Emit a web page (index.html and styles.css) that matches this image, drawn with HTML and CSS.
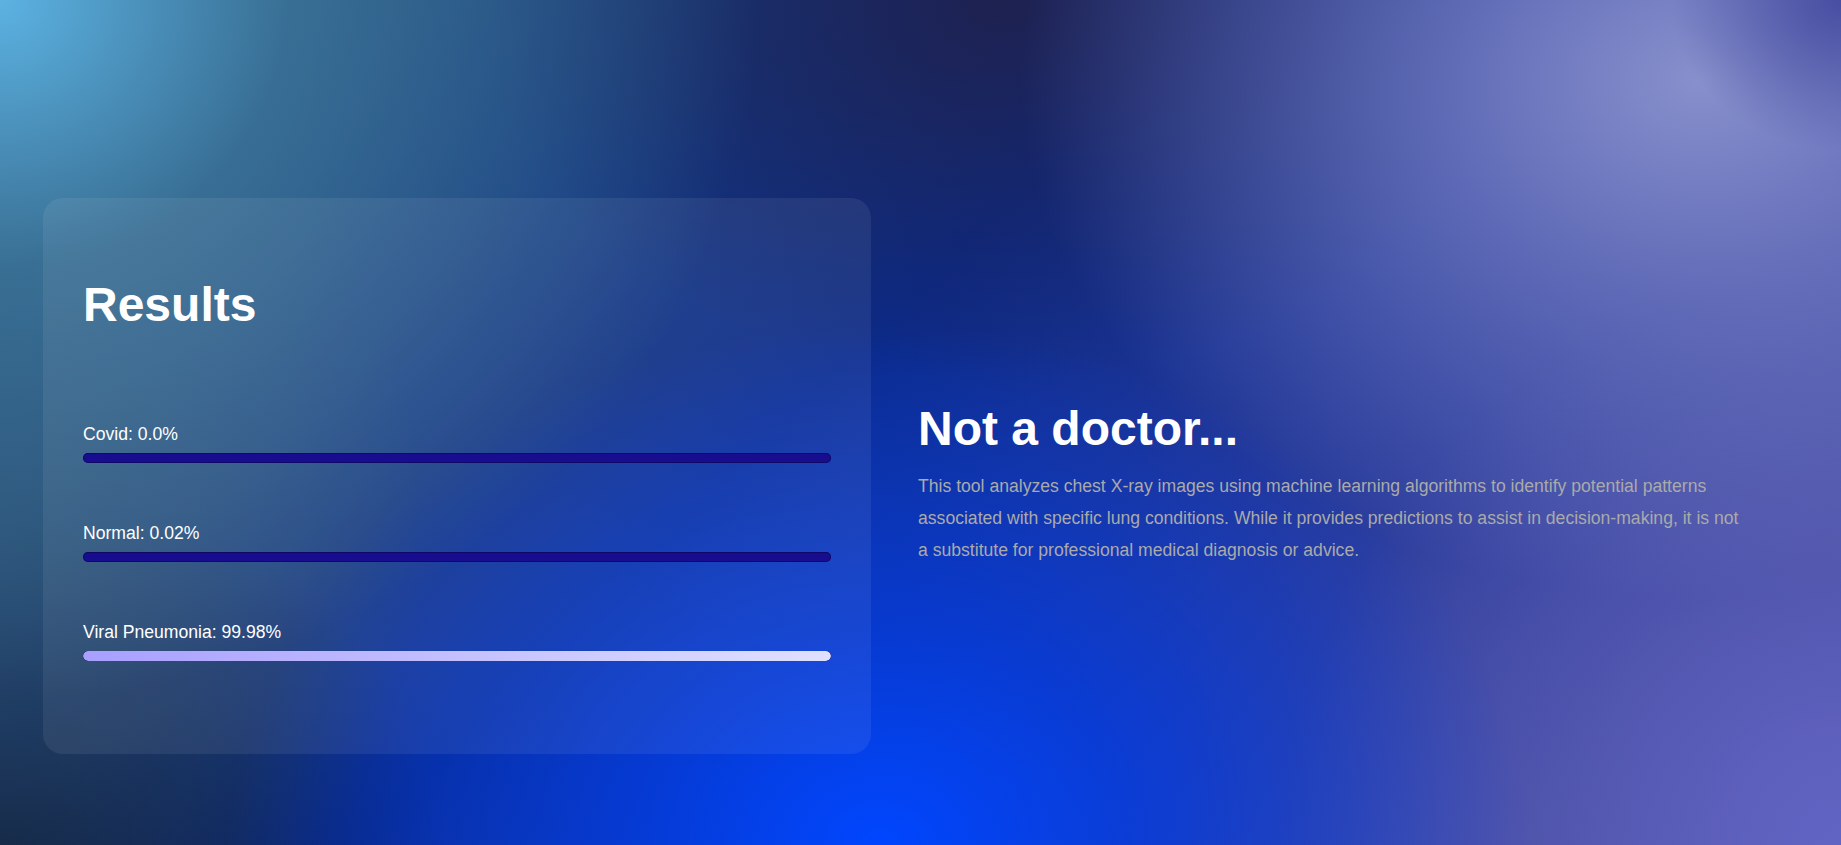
FILE: index.html
```html
<!DOCTYPE html>
<html lang="en">
<head>
<meta charset="utf-8">
<title>Results</title>
<link rel="stylesheet" href="styles.css">
</head>
<body>
<main class="page">
  <section class="card">
    <h1 class="card-title">Results</h1>
    <div class="bars">
      <div class="bar-item">
        <div class="bar-label">Covid: 0.0%</div>
        <div class="bar-track"><div class="bar-fill" style="width:0%"></div></div>
      </div>
      <div class="bar-item">
        <div class="bar-label">Normal: 0.02%</div>
        <div class="bar-track"><div class="bar-fill" style="width:0.02%"></div></div>
      </div>
      <div class="bar-item">
        <div class="bar-label">Viral Pneumonia: 99.98%</div>
        <div class="bar-track"><div class="bar-fill" style="width:99.98%"></div></div>
      </div>
    </div>
  </section>
  <section class="info">
    <h2 class="info-title">Not a doctor...</h2>
    <p class="info-text">This tool analyzes chest X-ray images using machine learning algorithms to identify potential patterns associated with specific lung conditions. While it provides predictions to assist in decision-making, it is not a substitute for professional medical diagnosis or advice.</p>
  </section>
</main>
</body>
</html>
```
FILE: styles.css
```css
html, body {
  margin: 0;
  padding: 0;
  height: 100%;
}
body {
  font-family: "Liberation Sans", Arial, sans-serif;
  color: #fff;
  overflow: hidden;
  background-color: #18307a;
  background-image:
    radial-gradient(ellipse 170px 150px at 100% 0%, rgba(70, 76, 160, 0.95), rgba(70, 76, 160, 0) 100%),
    radial-gradient(ellipse 760px 700px at 0% 0%, #5cb2e2 0%, rgba(62, 120, 156, 0.8) 38%, rgba(44, 86, 120, 0) 100%),
    radial-gradient(ellipse 420px 520px at 0% 62%, rgba(44, 78, 112, 0.85) 0%, rgba(44, 78, 112, 0) 100%),
    radial-gradient(ellipse 650px 520px at 880px 100%, #0046ff 0%, rgba(0, 60, 230, 0.75) 40%, rgba(0, 50, 200, 0) 100%),
    radial-gradient(ellipse 680px 520px at 1700px 80px, #8890cc 0%, rgba(120, 128, 196, 0.7) 40%, rgba(100, 105, 180, 0) 100%),
    radial-gradient(ellipse 560px 560px at 100% 100%, #6264c4 0%, rgba(90, 92, 180, 0.6) 50%, rgba(90, 92, 180, 0) 100%),
    radial-gradient(ellipse 520px 380px at 1000px 0%, #1e2150 0%, rgba(30, 33, 80, 0) 100%),
    radial-gradient(ellipse 440px 360px at 0% 100%, #0c1a36 0%, rgba(12, 26, 54, 0) 100%),
    linear-gradient(135deg, #28506e 0%, #0a2a8a 45%, #2a3c9c 70%, #5558aa 100%);
}
.page {
  box-sizing: border-box;
  height: 845px;
  padding: 107px 43px 0;
  display: flex;
  align-items: center;
  gap: 47px;
}
.card {
  box-sizing: border-box;
  flex: 0 0 828px;
  width: 828px;
  padding: 40px 40px 93px;
  border-radius: 20px;
  background: rgba(255, 255, 255, 0.07);
}
.card-title {
  margin: 38px 0 0;
  font-size: 48px;
  line-height: 1.2;
  font-weight: 700;
}
.bars {
  margin-top: 90px;
  display: flex;
  flex-direction: column;
  gap: 60px;
}
.bar-label {
  font-size: 17.6px;
  line-height: 20.24px;
  margin-bottom: 8.7px;
}
.bar-track {
  height: 10px;
  border-radius: 5px;
  background: #170d8e;
  box-shadow: inset 0 0 0 1px rgba(10, 5, 80, 0.6);
  overflow: hidden;
}
.bar-fill {
  height: 100%;
  border-radius: 5px;
  background: linear-gradient(90deg, #a89fff, #e0e0ff);
}
.info {
  margin-top: 14px;
  max-width: 835px;
}
.info-title {
  margin: 0 0 14px;
  font-size: 48px;
  line-height: 1.2;
  font-weight: 700;
}
.info-text {
  margin: 0;
  font-size: 17.6px;
  line-height: 1.8;
  color: #aaaaaa;
}
```
